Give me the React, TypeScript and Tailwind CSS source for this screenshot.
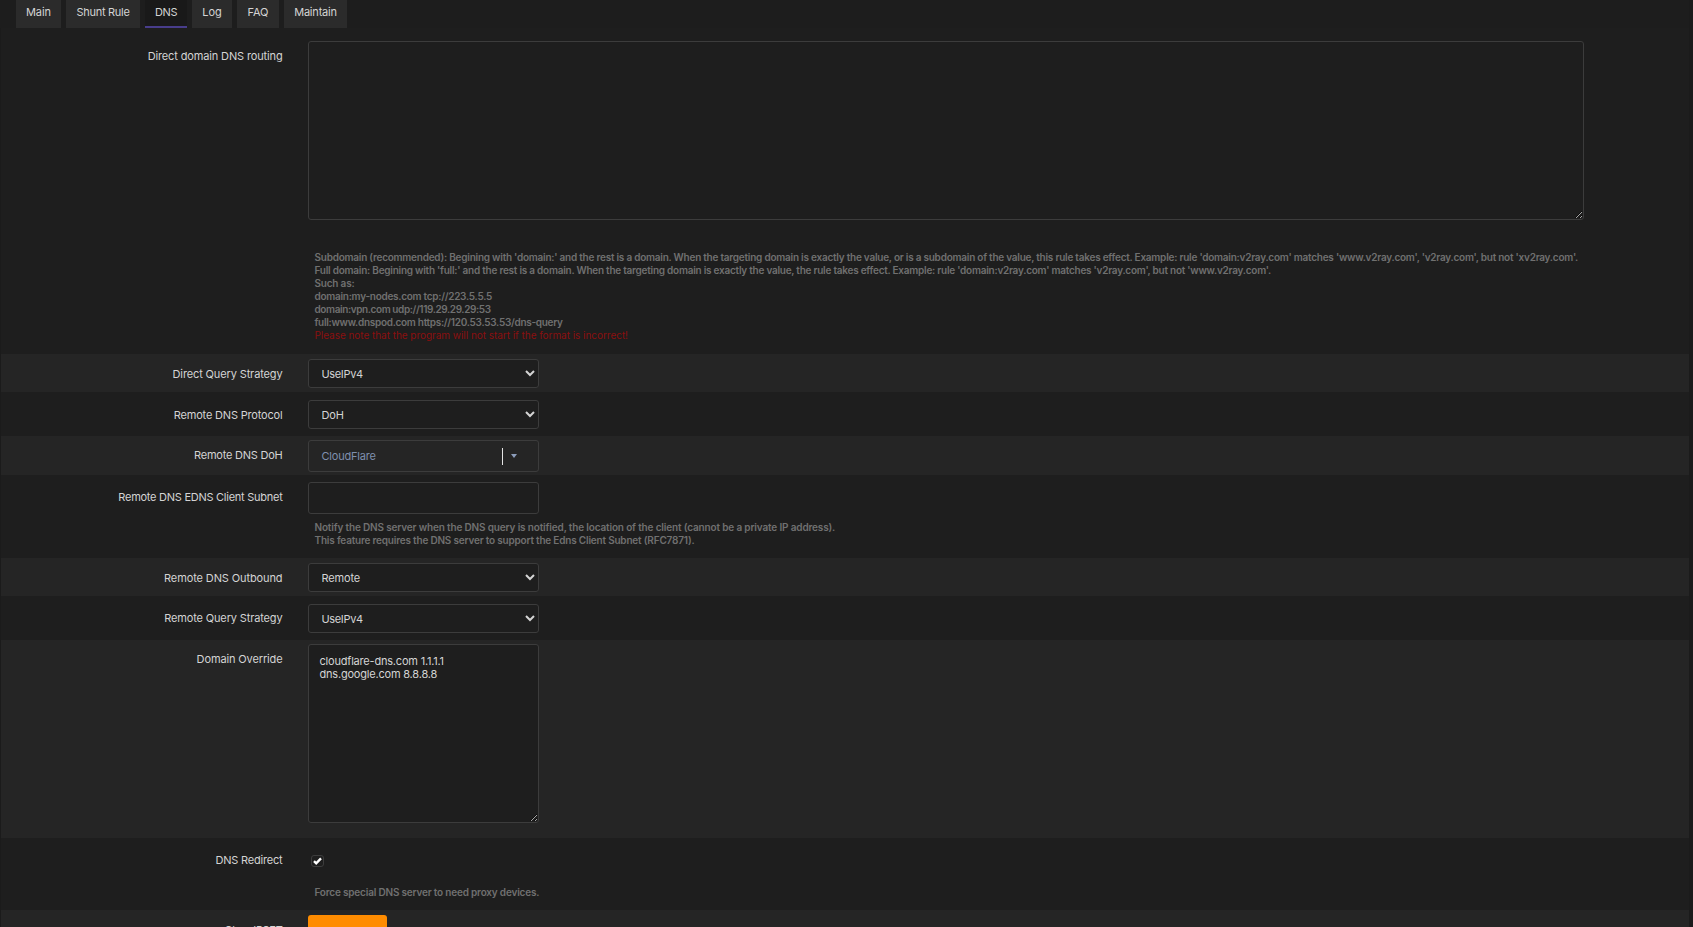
import { ReactNode } from "react";
import { clsx } from "clsx";

const tabs = [
  { name: "Main", width: "w-[45px] tracking-[-0.05px]" },
  { name: "Shunt Rule", width: "w-[74px] tracking-[-0.28px]" },
  { name: "DNS", width: "w-[42px] tracking-[-0.4px]" },
  { name: "Log", width: "w-[40px] tracking-[-0.1px]" },
  { name: "FAQ", width: "w-[42px] tracking-[-0.1px]" },
  { name: "Maintain", width: "w-[63px] tracking-[-0.2px]" },
];

interface RowProps {
  label: string;
  className: string;
  labelClass?: string;
  striped?: boolean;
  children: ReactNode;
}

function Row({ label, className, labelClass, striped, children }: RowProps) {
  return (
    <div className={clsx("flex shrink-0 items-start", striped ? "bg-[#252525]" : "bg-[#1e1e1e]", className)}>
      <label className={clsx("w-[281.5px] shrink-0 text-right leading-4 whitespace-nowrap", labelClass)}>{label}</label>
      <div className="ml-[25.5px]">{children}</div>
    </div>
  );
}

function Select({ value, className }: { value: string; className?: string }) {
  return (
    <select
      className={clsx(
        "block h-[29px] w-[231px] rounded-[3px] border border-[#3c3c3c] bg-[#1e1e1e] pl-[8.5px] text-[#d4d4d4] outline-none",
        className
      )}
    >
      <option>{value}</option>
    </select>
  );
}

function Hint({ className, children }: { className?: string; children: ReactNode }) {
  return (
    <div className={clsx("ml-[6.5px] text-[10px] leading-[13px] font-semibold whitespace-nowrap text-[#707070]", className)}>
      {children}
    </div>
  );
}

export default function App() {
  return (
    <div className="flex h-[927px] w-[1693px] flex-col overflow-hidden bg-[#1b1b1b] font-['Inter','Liberation_Sans',sans-serif] text-[11px] tracking-[-0.2px] text-[#d4d4d4] scheme-dark">
      {/* Tabs */}
      <div className="mr-1 flex h-7 shrink-0 gap-[5px] bg-[#1d1d1d] pl-4">
        {tabs.map((tab) => (
          <button
            key={tab.name}
            className={clsx(
              "h-7 pt-1 pb-2 text-center leading-4 whitespace-nowrap",
              tab.width,
              tab.name === "DNS" ? "border-b-2 border-[#483d8b] bg-[#191919]" : "bg-[#2b2b2b]"
            )}
          >
            {tab.name}
          </button>
        ))}
      </div>

      {/* Settings */}
      <div className="ml-px flex w-[1688px] flex-col">
        <Row label="Direct domain DNS routing" className="h-[326px] pt-[13px]" labelClass="pt-[7px] tracking-[-0.14px]">
          <textarea className="block h-[179px] w-[1276px] rounded-[3px] border border-[#3c3c3c] bg-[#1e1e1e] outline-none" />
          <Hint className="mt-[31px]">
            <p className="tracking-[-0.236px]">
              Subdomain (recommended): Begining with 'domain:' and the rest is a domain. When the targeting domain is exactly the value, or is a subdomain of the value, this rule takes effect. Example: rule 'domain:v2ray.com' matches 'www.v2ray.com', 'v2ray.com', but not 'xv2ray.com'.
            </p>
            <p className="tracking-[-0.243px]">
              Full domain: Begining with 'full:' and the rest is a domain. When the targeting domain is exactly the value, the rule takes effect. Example: rule 'domain:v2ray.com' matches 'v2ray.com', but not 'www.v2ray.com'.
            </p>
            <p>Such as:</p>
            <p className="tracking-[-0.27px]">domain:my-nodes.com tcp://223.5.5.5</p>
            <p className="tracking-[-0.4px]">domain:vpn.com udp://119.29.29.29:53</p>
            <p className="tracking-[-0.29px]">full:www.dnspod.com https://120.53.53.53/dns-query</p>
            <p className="font-normal tracking-[-0.04px] text-[#8b0f0f]">Please note that the program will not start if the format is incorrect!</p>
          </Hint>
        </Row>

        <Row label="Direct Query Strategy" className="h-[38px] pt-[5px]" labelClass="pt-[7px] tracking-[-0.13px]" striped>
          <Select value="UseIPv4" className="tracking-[-0.35px]" />
        </Row>

        <Row label="Remote DNS Protocol" className="h-11 pt-2" labelClass="pt-[7px] tracking-[-0.18px]">
          <Select value="DoH" className="tracking-[-0.2px]" />
        </Row>

        <Row label="Remote DNS DoH" className="h-[39px] pt-1" labelClass="pt-[7px] tracking-[-0.23px]" striped>
          <div className="flex h-8 w-[231px] items-center rounded-[3px] border border-[#3c3c3c] pl-[12.5px] text-[#7f8fae]">
            <span className="w-[180.5px] pt-px">CloudFlare</span>
            <span className="h-[17px] w-px bg-[#e4e4e4]" />
            <span className="ml-2 border-x-[3px] border-t-4 border-x-transparent border-t-[#8c9dbb]" />
          </div>
        </Row>

        <Row label="Remote DNS EDNS Client Subnet" className="h-[83px] pt-[7px]" labelClass="pt-[7px] tracking-[-0.26px]">
          <input className="block h-8 w-[231px] rounded-[3px] border border-[#3c3c3c] bg-[#1e1e1e] px-3 outline-none" />
          <Hint className="mt-[7px]">
            <p className="tracking-[-0.155px]">Notify the DNS server when the DNS query is notified, the location of the client (cannot be a private IP address).</p>
            <p className="tracking-[-0.195px]">This feature requires the DNS server to support the Edns Client Subnet (RFC7871).</p>
          </Hint>
        </Row>

        <Row label="Remote DNS Outbound" className="h-[38px] pt-[5px]" labelClass="pt-[7px] tracking-[-0.11px]" striped>
          <Select value="Remote" className="tracking-[-0.15px]" />
        </Row>

        <Row label="Remote Query Strategy" className="h-11 pt-2" labelClass="pt-1.5 tracking-[-0.14px]">
          <Select value="UseIPv4" className="tracking-[-0.35px]" />
        </Row>

        <Row label="Domain Override" className="h-[198px] pt-1" labelClass="pt-[7px] tracking-[-0.13px]" striped>
          <textarea
            className="block h-[179px] w-[231px] rounded-[3px] border border-[#3c3c3c] bg-[#1e1e1e] px-[10.5px] py-[10px] leading-[13px] tracking-[-0.2px] outline-none"
            defaultValue={"cloudflare-dns.com 1.1.1.1\ndns.google.com 8.8.8.8"}
          />
        </Row>

        <Row label="DNS Redirect" className="h-[72px] pt-[14px]" labelClass="tracking-[-0.2px]">
          <div className="mt-[3px] ml-[3px] flex h-3 w-[13px] items-center justify-center rounded-[3px] border border-[#3c3c3c]">
            <svg width="9" height="8" viewBox="0 0 9 8" fill="none" stroke="#fff" strokeWidth="2.4">
              <path d="M1 4.2 3.2 6.3 8 1.4" />
            </svg>
          </div>
          <Hint className="mt-[19px] tracking-[-0.19px]">Force special DNS server to need proxy devices.</Hint>
        </Row>

        <Row label="Clear IPSET" className="h-[38px] pt-[5px]" labelClass="pt-[7px] tracking-[-0.3px]" striped>
          <button className="block h-[29px] w-[79px] rounded-[3px] bg-[#ff8c00]" />
        </Row>
      </div>
    </div>
  );
}
